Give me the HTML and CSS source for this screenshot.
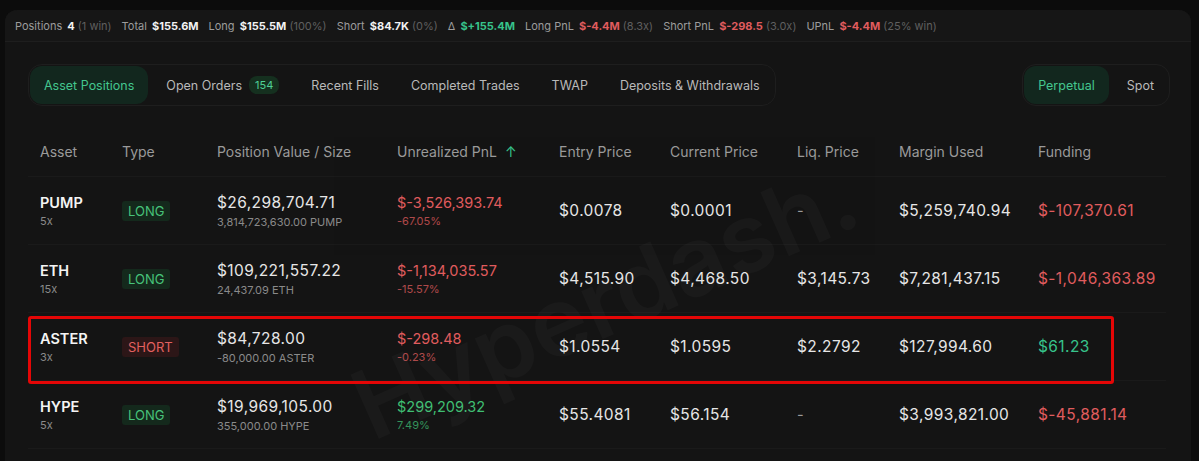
FILE: index.html
```html
<!DOCTYPE html>
<html lang="en">
<head>
    <meta charset="UTF-8">
    <meta name="viewport" content="width=device-width, initial-scale=1.0">
    <title>Positions</title>
    <link rel="stylesheet" href="styles.css">
</head>
<body>
    <div class="card">
        <div class="summary">
            <span class="stat">Positions <b>4</b> <i>(1 win)</i></span>
            <span class="stat">Total <b>$155.6M</b></span>
            <span class="stat">Long <b>$155.5M</b> <i>(100%)</i></span>
            <span class="stat">Short <b>$84.7K</b> <i>(0%)</i></span>
            <span class="stat">&Delta; <b class="up">$+155.4M</b></span>
            <span class="stat">Long PnL <b class="down">$-4.4M</b> <i>(8.3x)</i></span>
            <span class="stat">Short PnL <b class="down">$-298.5</b> <i>(3.0x)</i></span>
            <span class="stat">UPnL <b class="down">$-4.4M</b> <i>(25% win)</i></span>
        </div>

        <div class="panel">
            <div class="toolbar">
                <div class="tabs">
                    <button class="tab active">Asset Positions</button>
                    <button class="tab">Open Orders <span class="count">154</span></button>
                    <button class="tab">Recent Fills</button>
                    <button class="tab">Completed Trades</button>
                    <button class="tab">TWAP</button>
                    <button class="tab">Deposits &amp; Withdrawals</button>
                </div>
                <div class="tabs">
                    <button class="tab active">Perpetual</button>
                    <button class="tab">Spot</button>
                </div>
            </div>

            <table class="positions">
                <colgroup>
                    <col style="width: 82px">
                    <col style="width: 95px">
                    <col style="width: 180px">
                    <col style="width: 162px">
                    <col style="width: 111px">
                    <col style="width: 127px">
                    <col style="width: 102px">
                    <col style="width: 139px">
                    <col style="width: 140px">
                </colgroup>
                <thead>
                    <tr>
                        <th>Asset</th>
                        <th>Type</th>
                        <th>Position Value / Size</th>
                        <th>Unrealized PnL <span class="sort">&uarr;</span></th>
                        <th>Entry Price</th>
                        <th>Current Price</th>
                        <th>Liq. Price</th>
                        <th>Margin Used</th>
                        <th>Funding</th>
                    </tr>
                </thead>
                <tbody>
                    <tr>
                        <td><div class="asset">PUMP</div><div class="sub">5x</div></td>
                        <td><span class="side long">LONG</span></td>
                        <td><div class="num">$26,298,704.71</div><div class="sub">3,814,723,630.00 PUMP</div></td>
                        <td class="down pnl"><div>$-3,526,393.74</div><div class="sub">-67.05%</div></td>
                        <td class="num">$0.0078</td>
                        <td class="num">$0.0001</td>
                        <td class="muted">-</td>
                        <td class="num">$5,259,740.94</td>
                        <td class="num down">$-107,370.61</td>
                    </tr>
                    <tr>
                        <td><div class="asset">ETH</div><div class="sub">15x</div></td>
                        <td><span class="side long">LONG</span></td>
                        <td><div class="num">$109,221,557.22</div><div class="sub">24,437.09 ETH</div></td>
                        <td class="down pnl"><div>$-1,134,035.57</div><div class="sub">-15.57%</div></td>
                        <td class="num">$4,515.90</td>
                        <td class="num">$4,468.50</td>
                        <td class="num">$3,145.73</td>
                        <td class="num">$7,281,437.15</td>
                        <td class="num down">$-1,046,363.89</td>
                    </tr>
                    <tr>
                        <td><div class="asset">ASTER</div><div class="sub">3x</div></td>
                        <td><span class="side short">SHORT</span></td>
                        <td><div class="num">$84,728.00</div><div class="sub">-80,000.00 ASTER</div></td>
                        <td class="down pnl"><div>$-298.48</div><div class="sub">-0.23%</div></td>
                        <td class="num">$1.0554</td>
                        <td class="num">$1.0595</td>
                        <td class="num">$2.2792</td>
                        <td class="num">$127,994.60</td>
                        <td class="num up">$61.23</td>
                    </tr>
                    <tr>
                        <td><div class="asset">HYPE</div><div class="sub">5x</div></td>
                        <td><span class="side long">LONG</span></td>
                        <td><div class="num">$19,969,105.00</div><div class="sub">355,000.00 HYPE</div></td>
                        <td class="gain pnl"><div>$299,209.32</div><div class="sub">7.49%</div></td>
                        <td class="num">$55.4081</td>
                        <td class="num">$56.154</td>
                        <td class="muted">-</td>
                        <td class="num">$3,993,821.00</td>
                        <td class="num down">$-45,881.14</td>
                    </tr>
                </tbody>
            </table>

            <div class="watermark">Hyperdash.</div>
            <div class="highlight"></div>
        </div>
    </div>
</body>
</html>
```

FILE: styles.css
```css
body {
    margin: 0;
    background-color: #0c0c0c;
    color: #e8e8e8;
    font-family: Inter, "Liberation Sans", sans-serif;
    overflow: hidden;
}
.card {
    margin: 10px 8px 0 5px;
    background-color: #141414;
    border-radius: 12px 12px 0 0;
    height: 451px;
    overflow: hidden;
}
.summary {
    display: flex;
    align-items: center;
    gap: 10px;
    height: 30px;
    padding: 1px 10px 0;
    border-bottom: 1px solid #1e1e1e;
    background-color: #161616;
    font-size: 11px;
    color: #9c9c9c;
}
.summary b {
    color: #f2f2f2;
    font-weight: 700;
    margin-left: 2px;
}
.summary i {
    font-style: normal;
    color: #5f5f5f;
}
.up { color: #37c38b !important; }
.down { color: #e05c5e !important; }
.gain { color: #3fbe72 !important; }

.panel {
    position: relative;
    padding: 22px 21px 0 23px;
}
.toolbar {
    display: flex;
    justify-content: space-between;
    align-items: center;
}
.tabs {
    display: flex;
    gap: 4px;
    padding: 1px;
    border: 1px solid #1e1e1e;
    border-radius: 14px;
}
.tab {
    display: flex;
    align-items: center;
    gap: 7px;
    height: 38px;
    padding: 0 14px;
    border: none;
    border-radius: 12px;
    background: none;
    color: #b9b9b9;
    font-family: inherit;
    font-size: 12.5px;
}
.tab.active {
    background-color: #12271e;
    color: #43c68f;
}
.count {
    padding: 2px 6px;
    border-radius: 8px;
    background-color: #15301f;
    color: #4fcf97;
    font-size: 11px;
}

.positions {
    table-layout: fixed;
    width: 1138px;
    margin-top: 20px;
    border-collapse: collapse;
}
.positions th {
    height: 50px;
    padding: 0 12px;
    text-align: left;
    font-weight: 400;
    font-size: 14px;
    color: #9a9a9a;
    border-bottom: 1px solid #1a1a1a;
    white-space: nowrap;
}
.sort {
    color: #37c38b;
    margin-left: 4px;
}
.positions td {
    height: 67px;
    padding: 0 12px;
    font-size: 14.5px;
    color: #e6e6e6;
    border-bottom: 1px solid #1a1a1a;
    white-space: nowrap;
}
.positions .num {
    font-size: 15.5px;
    letter-spacing: 0.4px;
}
.positions td .sub {
    margin-top: 3px;
    font-size: 11px;
    letter-spacing: 0;
    color: #8a8a8a;
}
.positions td.pnl .sub {
    color: inherit;
    opacity: 0.75;
}
.asset {
    font-weight: 600;
    color: #f4f4f4;
}
.muted { color: #9a9a9a !important; }
.side {
    display: inline-block;
    padding: 2px 6px;
    border-radius: 3px;
    font-size: 13px;
}
.side.long {
    background-color: #14291c;
    color: #47c27a;
}
.side.short {
    background-color: #2c1617;
    color: #e2605f;
}

/* faint brand mark behind the rows */
.watermark {
    position: absolute;
    left: 330px;
    top: 200px;
    font-size: 96px;
    font-weight: 600;
    color: #ffffff;
    opacity: 0.022;
    transform: rotate(-24deg);
    pointer-events: none;
}
.highlight {
    position: absolute;
    left: 23px;
    top: 274px;
    width: 1080px;
    height: 62px;
    border: 3px solid #e50606;
    border-radius: 3px;
    pointer-events: none;
}
```
